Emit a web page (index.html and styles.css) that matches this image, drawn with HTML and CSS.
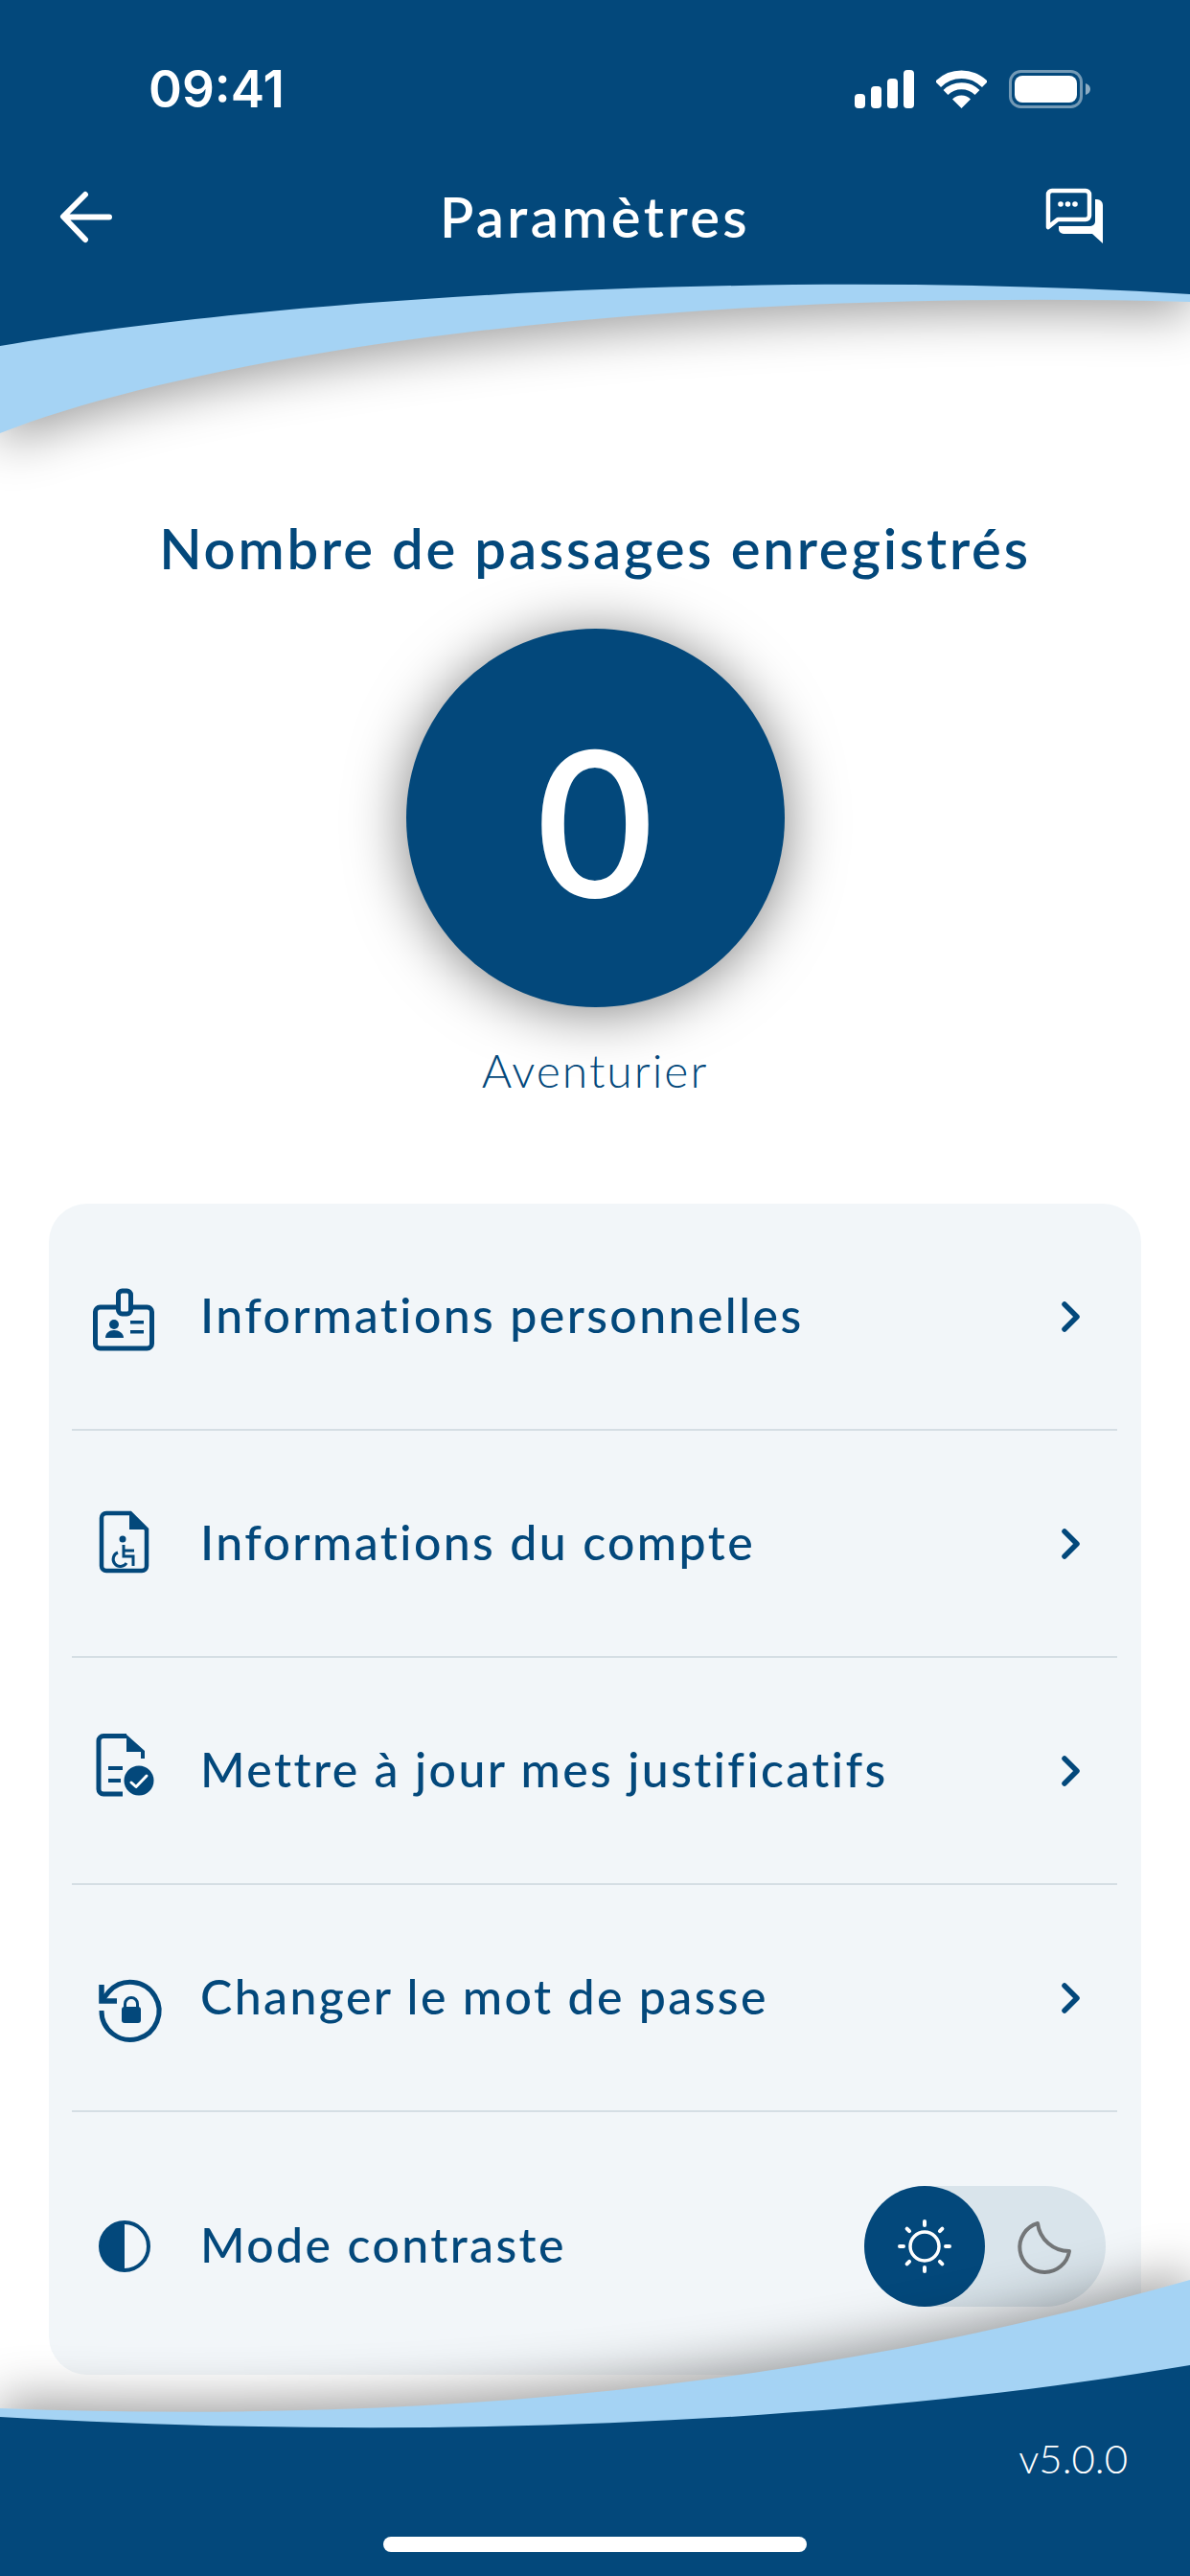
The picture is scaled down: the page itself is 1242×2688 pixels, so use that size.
FILE: index.html
```html
<!DOCTYPE html>
<html lang="fr">
<head>
    <meta charset="UTF-8">
    <title>Paramètres</title>
    <link rel="stylesheet" href="styles.css">
</head>
<body>
<div class="screen">
    <svg class="top-wave" viewBox="0 0 1242 500" aria-hidden="true">
        <path class="wave-light" d="M0 0H1242V315C700 300 220 365 0 452Z"/>
        <path class="wave-dark" d="M0 0H1242V307C800 280 300 310 0 361Z"/>
    </svg>

    <header class="header">
        <div class="status">
            <span class="time">09:41</span>
            <div class="status-icons">
                <svg width="62" height="40" viewBox="0 0 62 40">
                    <rect x="0" y="25" width="11" height="15" rx="4" fill="#fff"/>
                    <rect x="17" y="17" width="11" height="23" rx="4" fill="#fff"/>
                    <rect x="34" y="9" width="11" height="31" rx="4" fill="#fff"/>
                    <rect x="51" y="0" width="11" height="40" rx="4" fill="#fff"/>
                </svg>
                <svg width="53" height="40" viewBox="0 0 53 40">
                    <path d="M2 15A34.500 34.500 0 0 1 51 15" fill="none" stroke="#fff" stroke-width="8.500"/>
                    <path d="M10 23.500A23.500 23.500 0 0 1 43 23.500" fill="none" stroke="#fff" stroke-width="7"/>
                    <path d="M26.500 40L17 30.500A13.500 13.500 0 0 1 36 30.500Z" fill="#fff"/>
                </svg>
                <svg width="86" height="40" viewBox="0 0 86 40">
                    <rect x="1.500" y="1.500" width="74" height="37" rx="11" fill="none" stroke="#fff" stroke-opacity=".45" stroke-width="3"/>
                    <rect x="6" y="6" width="65" height="28" rx="8" fill="#fff"/>
                    <path d="M80 14c3 1 5 3 5 6s-2 5-5 6Z" fill="#fff" fill-opacity=".55"/>
                </svg>
            </div>
        </div>
        <nav class="nav">
            <svg width="120" height="90" viewBox="0 0 120 90">
                <path d="M27 23L4 46L27 70M5 46.500H52" fill="none" stroke="#fff" stroke-width="6" stroke-linecap="round" stroke-linejoin="round"/>
            </svg>
            <h1 class="title">Paramètres</h1>
            <svg width="120" height="90" viewBox="0 0 120 90">
                <path d="M38 19H73a4 4 0 0 1 4 4V45a4 4 0 0 1-4 4H44L34 57V23a4 4 0 0 1 4-4Z" fill="none" stroke="#fff" stroke-width="4.500" stroke-linejoin="round"/>
                <circle cx="47" cy="33" r="2.800" fill="#fff"/>
                <circle cx="54.500" cy="33" r="2.800" fill="#fff"/>
                <circle cx="62" cy="33" r="2.800" fill="#fff"/>
                <path d="M83 28h2a6 6 0 0 1 6 6V74L80 64H50a5 5 0 0 1-5-5v-3H78a5 5 0 0 0 5-5Z" fill="#fff"/>
            </svg>
        </nav>
    </header>

    <section class="score">
        <h2 class="score-label">Nombre de passages enregistrés</h2>
        <div class="score-circle">0</div>
        <p class="score-rank">Aventurier</p>
    </section>

    <section class="card">
        <a class="row">
            <svg class="row-icon" viewBox="0 -3 120 120">
                <rect x="29.500" y="47" width="59" height="43" rx="5" fill="none" stroke="#03487b" stroke-width="5"/>
                <rect x="53.500" y="30" width="13" height="24" rx="4" fill="#f2f6f9" stroke="#03487b" stroke-width="5"/>
                <circle cx="49" cy="65" r="5" fill="#03487b"/>
                <path d="M40 79c0-5 4-8 9-8s10 3 10 8Z" fill="#03487b"/>
                <rect x="66" y="61" width="14" height="3.500" fill="#03487b"/>
                <rect x="66" y="71" width="14" height="3.500" fill="#03487b"/>
            </svg>
            <span class="row-text">Informations personnelles</span>
            <svg class="chevron" width="24" height="34" viewBox="0 0 24 34"><path d="M5 4L18 17L5 30" fill="none" stroke="#03487b" stroke-width="5.500" stroke-linecap="round" stroke-linejoin="round"/></svg>
        </a>
        <a class="row">
            <svg class="row-icon" viewBox="0 1 120 120">
                <path d="M41 29H66L83 46V84a5 5 0 0 1-5 5H41a5 5 0 0 1-5-5V34a5 5 0 0 1 5-5Z" fill="none" stroke="#03487b" stroke-width="4.500"/>
                <path d="M65 28L84 46H65Z" fill="#03487b"/>
                <circle cx="58" cy="56" r="3.500" fill="#03487b"/>
                <path d="M59 62V74H69V84M59 68H70" fill="none" stroke="#03487b" stroke-width="3"/>
                <path d="M53 70a7.500 7.500 0 1 0 9 11" fill="none" stroke="#03487b" stroke-width="3"/>
            </svg>
            <span class="row-text">Informations du compte</span>
            <svg class="chevron" width="24" height="34" viewBox="0 0 24 34"><path d="M5 4L18 17L5 30" fill="none" stroke="#03487b" stroke-width="5.500" stroke-linecap="round" stroke-linejoin="round"/></svg>
        </a>
        <a class="row">
            <svg class="row-icon" viewBox="0 3 120 120">
                <path d="M62 26.500H38a5 5 0 0 0-5 5V82a5 5 0 0 0 5 5H58" fill="none" stroke="#03487b" stroke-width="5"/>
                <path d="M62 25L81 42V50H77V43H62Z" fill="#03487b"/>
                <rect x="43" y="58" width="15" height="4" fill="#03487b"/>
                <rect x="43" y="71" width="13" height="4" fill="#03487b"/>
                <circle cx="75" cy="73" r="15.500" fill="#03487b"/>
                <path d="M67 75L72 79.500L83 68" fill="none" stroke="#fff" stroke-width="3" stroke-linecap="round" stroke-linejoin="round"/>
            </svg>
            <span class="row-text">Mettre à jour mes justificatifs</span>
            <svg class="chevron" width="24" height="34" viewBox="0 0 24 34"><path d="M5 4L18 17L5 30" fill="none" stroke="#03487b" stroke-width="5.500" stroke-linecap="round" stroke-linejoin="round"/></svg>
        </a>
        <a class="row">
            <svg class="row-icon" viewBox="0 -3 120 120">
                <path d="M36 60L44 50A30 30 0 1 1 36 70" fill="none" stroke="#03487b" stroke-width="5"/>
                <path d="M36 43V60H52" fill="none" stroke="#03487b" stroke-width="5.500"/>
                <rect x="57" y="66" width="20" height="17" rx="3" fill="#03487b"/>
                <path d="M60.500 67V63a6.500 6.500 0 0 1 13 0V67" fill="none" stroke="#03487b" stroke-width="3"/>
            </svg>
            <span class="row-text">Changer le mot de passe</span>
            <svg class="chevron" width="24" height="34" viewBox="0 0 24 34"><path d="M5 4L18 17L5 30" fill="none" stroke="#03487b" stroke-width="5.500" stroke-linecap="round" stroke-linejoin="round"/></svg>
        </a>
        <div class="row row-last">
            <svg class="row-icon" viewBox="0 0 120 120">
                <circle cx="60" cy="60" r="25" fill="none" stroke="#03487b" stroke-width="4"/>
                <path d="M60 35A25 25 0 0 0 60 85Z" fill="#03487b"/>
            </svg>
            <span class="row-text">Mode contraste</span>
            <div class="toggle">
                <span class="toggle-knob">
                    <svg width="126" height="126" viewBox="0 0 126 126">
                        <circle cx="63" cy="63" r="15" fill="none" stroke="#fff" stroke-width="3.500"/>
                        <path d="M63 37v4M63 85v4M37 63h4M85 63h4M44.600 44.600l2.500 2.500M78.900 78.900l2.500 2.500M44.600 81.400l2.500-2.500M78.900 47.100l2.500-2.500" stroke="#fff" stroke-width="4" stroke-linecap="round"/>
                    </svg>
                </span>
                <svg width="126" height="126" viewBox="0 0 126 126">
                    <path d="M55 39A26 26 0 1 0 88 68A33 33 0 0 1 55 39Z" fill="none" stroke="#737678" stroke-width="4" stroke-linejoin="round"/>
                </svg>
            </div>
        </div>
    </section>

    <footer class="footer">
        <svg class="bottom-wave" viewBox="0 2300 1242 388" aria-hidden="true">
            <path class="wave-light wave-light-up" d="M0 2513C450 2530 850 2490 1242 2379V2688H0Z"/>
            <path class="wave-dark" d="M0 2522C400 2545 850 2535 1242 2468V2688H0Z"/>
        </svg>
        <span class="version">v5.0.0</span>
        <span class="home-bar"></span>
    </footer>
</div>
</body>
</html>
```

FILE: styles.css
```css
*{
    margin: 0;
    padding: 0;
    box-sizing: border-box;
}
body{
    background: #fff;
    font-family: "Lato", "Open Sans", sans-serif;
    color: #03487b;
}
.screen{
    width: 1242px;
    height: 2688px;
    position: relative;
    overflow: hidden;
    background: #fff;
}
.top-wave{
    position: absolute;
    left: 0;
    top: 0;
    width: 1242px;
    height: 500px;
    overflow: visible;
}
.wave-light{
    fill: #a5d3f4;
    filter: drop-shadow(0 12px 26px rgba(0,0,0,.38));
}
.wave-light-up{
    filter: drop-shadow(0 -10px 26px rgba(0,0,0,.38));
}
.wave-dark{
    fill: #03487b;
}

/* header */
.header{
    position: relative;
    height: 300px;
    padding-top: 63px;
    color: #fff;
}
.status{
    height: 60px;
    display: flex;
    justify-content: space-between;
    align-items: center;
    padding: 0 103px 0 155px;
}
.time{
    font-family: "Inter", sans-serif;
    font-size: 53px;
    font-weight: 600;
    letter-spacing: 0;
}
.status-icons{
    display: flex;
    align-items: center;
    gap: 23px;
}
.nav{
    margin-top: 57px;
    padding: 0 62px;
    display: grid;
    grid-template-columns: 120px 1fr 120px;
    align-items: center;
}
.title{
    text-align: center;
    font-size: 58px;
    font-weight: 600;
    letter-spacing: 3.4px;
}

/* score */
.score{
    margin-top: 242px;
    display: flex;
    flex-direction: column;
    align-items: center;
}
.score-label{
    font-size: 58px;
    line-height: 60px;
    font-weight: 600;
    letter-spacing: 2.8px;
}
.score-circle{
    width: 395px;
    height: 395px;
    margin-top: 54px;
    border-radius: 50%;
    background: #03487b;
    color: #fff;
    display: flex;
    align-items: center;
    justify-content: center;
    font-size: 212px;
    font-weight: 600;
    box-shadow: 0 4px 60px rgba(0,0,0,.5);
}
.score-rank{
    margin-top: 36px;
    font-size: 48px;
    line-height: 60px;
    font-weight: 300;
    letter-spacing: 2px;
}

/* card */
.card{
    width: 1140px;
    height: 1222px;
    margin: 109px 0 0 51px;
    background: #f2f6f9;
    border-radius: 40px;
    padding: 0 24px 0 19px;
}
.row{
    height: 237px;
    display: flex;
    align-items: center;
    border-bottom: 2px solid #d5dee4;
    margin-right: 1px;
    margin-left: 5px;
}
.row-icon{
    width: 120px;
    height: 120px;
    margin-left: -5px;
    flex: none;
}
.row-text{
    margin-left: 19px;
    margin-bottom: 3px;
    flex: 1;
    font-size: 50px;
    font-weight: 500;
    letter-spacing: 2.4px;
}
.chevron{
    margin-right: 36px;
    flex: none;
}
.row-last{
    height: 279px;
    border-bottom: 0;
}
.toggle{
    width: 252px;
    height: 126px;
    margin-right: 12px;
    border-radius: 63px;
    background: #d9e4eb;
    display: flex;
}
.toggle-knob{
    width: 126px;
    height: 126px;
    border-radius: 50%;
    background: #03487b;
}

/* footer */
.footer{
    position: absolute;
    left: 0;
    bottom: 0;
    width: 1242px;
    height: 388px;
    display: flex;
    flex-direction: column;
    align-items: center;
}
.bottom-wave{
    position: absolute;
    left: 0;
    top: 0;
    width: 1242px;
    height: 388px;
    overflow: visible;
}
.version{
    position: relative;
    align-self: flex-end;
    margin: 240px 65px 0 0;
    line-height: 50px;
    font-size: 42px;
    font-weight: 300;
    color: #fff;
}
.home-bar{
    position: relative;
    width: 442px;
    height: 16px;
    margin-top: 57px;
    border-radius: 8px;
    background: #fff;
}
```
